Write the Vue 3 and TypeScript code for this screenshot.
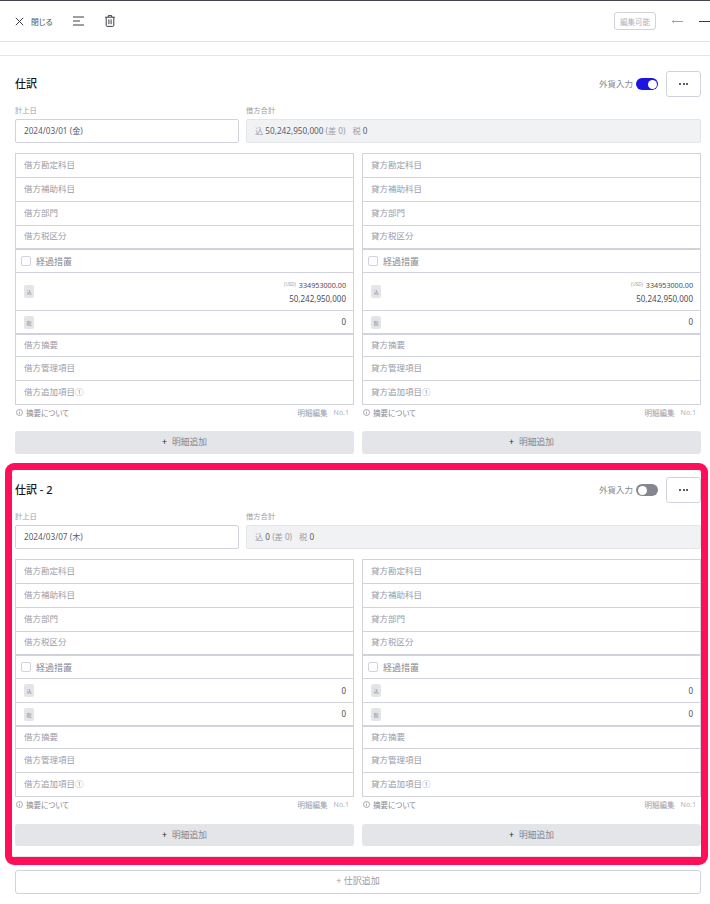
<script setup lang="ts">
interface Amount {
  foreign?: string
  base: string
}

interface Journal {
  title: string
  date: string
  total: string
  fx: boolean
  amount: Amount
  highlighted: boolean
}

const journals: Journal[] = [
  {
    title: '仕訳',
    date: '2024/03/01 (金)',
    total: '50,242,950,000',
    fx: true,
    amount: { foreign: '334953000.00', base: '50,242,950,000' },
    highlighted: false,
  },
  {
    title: '仕訳 - 2',
    date: '2024/03/07 (木)',
    total: '0',
    fx: false,
    amount: { base: '0' },
    highlighted: true,
  },
]

const sides = ['借方', '貸方']
</script>

<template>
  <div class="page">
    <header class="topbar">
      <button class="close-btn">
        <svg width="9" height="9" viewBox="0 0 9 9"><path d="M.8.8l7.4 7.4M8.2.8L.8 8.2" stroke="#3c3d46" fill="none" /></svg>
        <span>閉じる</span>
      </button>
      <svg class="tool-align" width="11" height="10" viewBox="0 0 11 10"><path d="M0 1h11M0 5h7M0 9h11" stroke="#3c3d46" fill="none" /></svg>
      <svg class="tool-trash" width="10" height="12" viewBox="0 0 10 12"><path d="M.2 2.2h9.6M3.3 2V.6h3.4V2M1.2 2.2v8.2c0 .6.4 1 1 1h5.6c.6 0 1-.4 1-1V2.2M3.9 4.4v4.8M6.1 4.4v4.8" stroke="#3c3d46" fill="none" /></svg>
      <span class="status">編集可能</span>
      <svg class="arrow-prev" width="11" height="5" viewBox="0 0 11 5"><path d="M11 2.5H.5M1.8 1.4L.5 2.5l1.3 1.1" stroke="#85868f" stroke-width=".8" fill="none" /></svg>
      <svg class="arrow-next" width="14" height="5" viewBox="0 0 14 5"><path d="M0 2.5h14M12 1l1.7 1.5L12 4" stroke="#26262c" stroke-width=".9" fill="none" /></svg>
    </header>
    <div class="subbar"></div>

    <section v-for="journal in journals" :key="journal.title" class="journal" :class="{ highlighted: journal.highlighted }">
      <div class="journal-head">
        <h2>{{ journal.title }}</h2>
        <span class="fx-label">外貨入力</span>
        <span class="toggle" :class="{ on: journal.fx }"><i></i></span>
        <button class="more"><b></b><b></b><b></b></button>
      </div>

      <div class="summary">
        <div class="date-col">
          <label>計上日</label>
          <div class="date-input">{{ journal.date }}</div>
        </div>
        <div class="total-col">
          <label>借方合計</label>
          <div class="total-box">
            <span class="muted">込</span> {{ journal.total }} <span class="muted">(差 0)</span><span class="muted tax">税</span> 0
          </div>
        </div>
      </div>

      <div class="columns">
        <div v-for="side in sides" :key="side" class="side">
          <div class="block">
            <div class="row">{{ side }}勘定科目</div>
            <div class="row">{{ side }}補助科目</div>
            <div class="row">{{ side }}部門</div>
            <div class="row">{{ side }}税区分</div>
          </div>
          <div class="block">
            <div class="row check-row"><span class="checkbox"></span>経過措置</div>
            <div class="row amount-row" :class="{ tall: journal.amount.foreign }">
              <span class="tag">込</span>
              <div class="amount">
                <div v-if="journal.amount.foreign" class="foreign"><small>(USD)</small>{{ journal.amount.foreign }}</div>
                <div>{{ journal.amount.base }}</div>
              </div>
            </div>
            <div class="row amount-row">
              <span class="tag">税</span>
              <div class="amount">0</div>
            </div>
          </div>
          <div class="block">
            <div class="row">{{ side }}摘要</div>
            <div class="row">{{ side }}管理項目</div>
            <div class="row">{{ side }}追加項目①</div>
          </div>
          <div class="notes">
            <svg width="7" height="7" viewBox="0 0 7 7"><circle cx="3.5" cy="3.5" r="3" fill="none" stroke="#85868f" stroke-width=".7" /><path d="M3.5 3v2.2M3.5 1.7v.7" stroke="#85868f" stroke-width=".7" /></svg>
            <span class="note-link">摘要について</span>
            <span class="note-edit">明細編集</span>
            <span class="note-no">No.1</span>
          </div>
          <button class="add-line"><em>+</em>明細追加</button>
        </div>
      </div>
    </section>

    <div class="add-wrap">
      <button class="add-journal">+ 仕訳追加</button>
    </div>
  </div>
</template>

<style>
html,
body {
  margin: 0;
  background: #fff;
}
</style>

<style scoped>
.page {
  width: 710px;
  height: 904px;
  overflow: hidden;
  box-sizing: border-box;
  border-top: 1px solid #45464d;
  font-family: "Noto Sans", "Noto Sans CJK JP", sans-serif;
  font-feature-settings: "palt";
  color: #5b5c68;
  background: #fff;
}

button {
  font-family: inherit;
  font-feature-settings: inherit;
  padding: 0;
  cursor: pointer;
}

.topbar {
  height: 41px;
  display: flex;
  align-items: center;
  padding-left: 15px;
  box-sizing: border-box;
  border-bottom: 1px solid #e4e5e9;
}

.close-btn {
  display: flex;
  align-items: center;
  gap: 7px;
  border: none;
  background: none;
  font-size: 7.8px;
  color: #4c4d59;
}

.tool-align {
  margin-left: 20px;
}

.tool-trash {
  margin-left: 21px;
}

.status {
  margin-left: auto;
  width: 42px;
  height: 18px;
  display: flex;
  align-items: center;
  justify-content: center;
  box-sizing: border-box;
  border: 1px solid #d1d2dc;
  border-radius: 3px;
  font-size: 7.5px;
  color: #b0b1bc;
}

.arrow-prev {
  margin-left: 16px;
}

.arrow-next {
  flex: none;
  margin-left: 16px;
  margin-right: -3px;
}

.subbar {
  height: 14px;
  box-sizing: border-box;
  border-bottom: 1px solid #e4e5e9;
}

.journal {
  padding: 15px 9px 9px 15px;
}

.journal.highlighted {
  margin: 0 2px 0 5px;
  padding: 7px 0 0 3px;
  border: 7px solid #ff0f5a;
  border-bottom-width: 8px;
  border-radius: 9px;
  width: 703px;
  box-sizing: border-box;
}

.journal-head {
  height: 26px;
  display: flex;
  align-items: center;
}

.journal-head h2 {
  margin: 0 auto 0 0;
  padding-bottom: 2px;
  font-size: 11px;
  font-weight: 500;
  color: #16161c;
}

.fx-label {
  padding-bottom: 2px;
  font-size: 8.5px;
  color: #85868f;
}

.toggle {
  width: 22px;
  height: 12px;
  margin: 0 8px 0 3px;
  padding: 1.5px;
  box-sizing: border-box;
  border-radius: 6px;
  background: #85868f;
  display: flex;
}

.toggle.on {
  background: #1c14e0;
  justify-content: flex-end;
}

.toggle i {
  width: 9px;
  height: 9px;
  border-radius: 50%;
  background: #fff;
}

.more {
  width: 35px;
  height: 26px;
  display: flex;
  align-items: center;
  justify-content: center;
  gap: 1.2px;
  background: #fff;
  border: 1px solid #d1d2dc;
  border-radius: 3px;
}

.more b {
  width: 2px;
  height: 2px;
  border-radius: 50%;
  background: #26262c;
}

.summary {
  display: flex;
  gap: 7px;
  margin-top: 9px;
}

.summary label {
  display: block;
  height: 13px;
  line-height: 9px;
  font-size: 7.3px;
  color: #9a9ba8;
}

.date-col {
  width: 224px;
}

.total-col {
  flex: 1;
}

.date-input,
.total-box {
  height: 24px;
  box-sizing: border-box;
  display: flex;
  align-items: center;
  padding: 0 0 2px 8px;
  border-radius: 2px;
  font-size: 8.2px;
  white-space: pre;
}

.date-input {
  border: 1px solid #d1d2dc;
}

.total-box {
  background: #f1f2f4;
  border: 1px solid #e4e5e9;
}

.muted {
  color: #9a9ba8;
}

.tax {
  margin-left: 7px;
}

.columns {
  display: flex;
  gap: 8px;
  margin-top: 10px;
}

.side {
  width: 339px;
}

.block {
  border: solid #d1d2dc;
  border-width: 0 1px;
}

.block:first-child {
  border-top: 1px solid #d1d2dc;
}

.block:nth-child(3) {
  border-bottom: 1px solid #d1d2dc;
}

.row {
  height: 24px;
  box-sizing: border-box;
  display: flex;
  align-items: center;
  padding: 0 0 4px 8px;
  border-bottom: 1px solid #d1d2dc;
  font-size: 8.5px;
  font-feature-settings: normal;
  color: #9a9ba8;
}

.block:nth-child(-n + 2) .row:last-child {
  border-bottom-width: 2px;
}

.block:nth-child(3) .row:last-child {
  height: 23px;
  border-bottom: none;
}

.block:nth-child(2) .row:first-child {
  height: 23px;
}

.block:nth-child(3) .row:first-child {
  height: 22px;
}

.check-row {
  padding: 0 0 0 5px;
  gap: 5px;
  font-size: 9px;
  color: #85868f;
}

.checkbox {
  width: 10px;
  height: 10px;
  box-sizing: border-box;
  border: 1px solid #d1d2dc;
  border-radius: 2px;
}

.amount-row {
  justify-content: space-between;
  padding: 0 7px 0 8px;
}

.amount-row.tall {
  height: 38px;
}

.tag {
  width: 10px;
  height: 13px;
  display: flex;
  align-items: center;
  justify-content: center;
  border-radius: 2px;
  background: #e4e5e9;
  font-size: 5px;
  color: #85868f;
}

.amount {
  padding-bottom: 1px;
  text-align: right;
  font-size: 8px;
  line-height: 13px;
  color: #4c4d59;
}

.foreign {
  font-size: 7.2px;
}

.foreign small {
  font-size: 4.5px;
  color: #9a9ba8;
  margin-right: 3px;
  vertical-align: 2px;
}

.notes {
  height: 16px;
  padding: 0 5px 2px 1px;
  box-sizing: border-box;
  display: flex;
  align-items: center;
  font-size: 7.5px;
  color: #85868f;
}

.note-link {
  margin-left: 3px;
}

.note-edit {
  margin-left: auto;
  color: #9a9ba8;
}

.note-no {
  margin-left: 6px;
  font-size: 7px;
  color: #b0b1bc;
}

.add-line {
  display: block;
  width: 100%;
  height: 23px;
  margin-top: 10px;
  padding-bottom: 2px;
  background: #e4e5e9;
  border: none;
  border-radius: 3px;
  font-size: 8.75px;
  color: #85868f;
}

.highlighted .add-line {
  height: 22px;
  margin-top: 11px;
}

.highlighted .columns {
  padding-bottom: 10px;
  border-bottom: 1px solid #e4e5e9;
  width: 686px;
}

.add-line em {
  margin-right: 5px;
  font-style: normal;
  color: #26262c;
}

.add-wrap {
  padding: 5px 9px 0 15px;
}

.add-journal {
  display: block;
  width: 100%;
  height: 24px;
  padding-bottom: 3px;
  background: #fff;
  border: 1px solid #d1d2dc;
  border-radius: 3px;
  font-size: 9px;
  color: #9a9ba8;
}
</style>
